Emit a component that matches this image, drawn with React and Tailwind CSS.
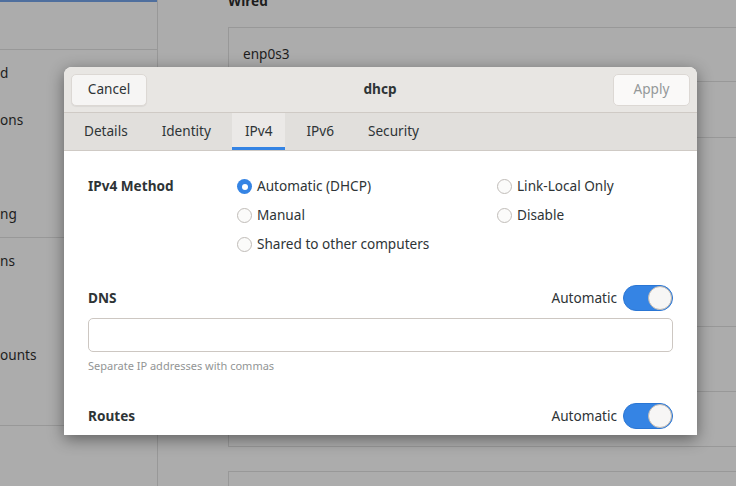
export default function App() {
  const font = { fontFamily: '"Noto Sans", "DejaVu Sans", sans-serif' };

  return (
    <div
      className="relative w-[736px] h-[486px] overflow-hidden bg-[#acacac] flex text-[#1d1d1d] text-[13.6px]"
      style={font}
    >
      {/* Sidebar behind the dialog */}
      <aside className="w-[158px] shrink-0 border-r border-[#989898] flex flex-col">
        <div className="h-[2px] bg-[#4f6f9e]" />
        <div className="h-[48px] border-b border-[#989898]" />
        <SideRow label="d" />
        <SideRow label="ons" />
        <SideRow label="" />
        <SideRow label="ng" last />
        <SideRow label="ns" />
        <SideRow label="" />
        <SideRow label="ounts" />
        <SideRow label="" last />
      </aside>

      {/* Network page behind the dialog */}
      <main className="flex-1 pl-[70px]">
        <div className="-mt-[9px] mb-[16px] leading-[20px] font-bold">Wired</div>
        <div className="w-[600px] border border-[#989898] flex flex-col">
          <div className="h-[54px] border-b border-[#989898] flex items-center pl-[14px]">enp0s3</div>
          <div className="h-[56px] border-b border-[#989898]" />
          <div className="h-[189px] border-b border-[#989898]" />
          <div className="h-[65px] border-b border-[#989898]" />
          <div className="h-[54px]" />
        </div>
        <div className="mt-[24px] w-[600px] h-[60px] border border-[#989898]" />
      </main>

      {/* Dialog */}
      <div className="absolute left-[64px] top-[67px] w-[633px] h-[368px] rounded-t-[8px] overflow-hidden bg-white flex flex-col shadow-[0_4px_16px_rgba(0,0,0,0.45)] text-[#2e3436]">
        {/* Header bar */}
        <div className="h-[46px] shrink-0 bg-[#e8e6e3] border-b border-[#cfcac5] flex items-center justify-between px-[7px]">
          <button className="w-[76px] h-[32px] rounded-[5px] bg-[#f6f5f4] border border-[#dcd8d4] shadow-[0_1px_1px_rgba(0,0,0,0.06)] text-[#2e3436]">
            Cancel
          </button>
          <div className="font-bold">dhcp</div>
          <button className="w-[77px] h-[32px] rounded-[5px] bg-[#faf9f8] border border-[#dcd8d4] text-[#949898]">
            Apply
          </button>
        </div>

        {/* Tabs */}
        <div className="h-[38px] shrink-0 bg-[#e1dfdc] border-b border-[#cfcac5] flex items-stretch pl-[7px] gap-[8px]">
          <Tab label="Details" />
          <Tab label="Identity" />
          <Tab label="IPv4" active />
          <Tab label="IPv6" />
          <Tab label="Security" />
        </div>

        {/* Content */}
        <div className="flex-1 px-6 pt-[21px] flex flex-col">
          <div className="flex">
            <div className="w-[149px] h-[29px] flex items-center font-bold">IPv4 Method</div>
            <div className="w-[260px] flex flex-col">
              <Radio label="Automatic (DHCP)" checked />
              <Radio label="Manual" />
              <Radio label="Shared to other computers" />
            </div>
            <div className="flex flex-col">
              <Radio label="Link-Local Only" />
              <Radio label="Disable" />
            </div>
          </div>

          <div className="mt-[26px] h-[26px] flex items-center justify-between">
            <div className="font-bold">DNS</div>
            <div className="flex items-center gap-[6px]">
              <span>Automatic</span>
              <Switch />
            </div>
          </div>
          <div className="mt-[7px] h-[34px] rounded-[5px] border border-[#cdc7c2] bg-white" />
          <div className="mt-[6px] text-[11px] leading-[16px] text-[#929595]">
            Separate IP addresses with commas
          </div>

          <div className="mt-[29px] h-[26px] flex items-center justify-between">
            <div className="font-bold">Routes</div>
            <div className="flex items-center gap-[6px]">
              <span>Automatic</span>
              <Switch />
            </div>
          </div>
        </div>
      </div>
    </div>
  );
}

function SideRow({ label, last }) {
  return (
    <div className={`h-[47px] flex items-center ${last ? "border-b border-[#989898]" : ""}`}>
      {label}
    </div>
  );
}

function Tab({ label, active }) {
  return (
    <div
      className={`relative px-[13px] flex items-center ${
        active ? "bg-[#ebe9e7]" : ""
      }`}
    >
      {label}
      {active && <div className="absolute left-0 right-0 bottom-0 h-[3px] bg-[#3584e4]" />}
    </div>
  );
}

function Radio({ label, checked }) {
  return (
    <div className="h-[29px] flex items-center gap-[5px]">
      {checked ? (
        <span className="w-[15px] h-[15px] rounded-full bg-[#3584e4] flex items-center justify-center">
          <span className="w-[6px] h-[6px] rounded-full bg-white" />
        </span>
      ) : (
        <span className="w-[15px] h-[15px] rounded-full border border-[#c0bcb8] bg-[#fbfbfa]" />
      )}
      <span>{label}</span>
    </div>
  );
}

function Switch() {
  return (
    <div className="w-[50px] h-[26px] rounded-full bg-[#3584e4] border border-[#2a76d4] flex items-center justify-end">
      <div className="w-[24px] h-[24px] rounded-full bg-[#f7f6f5] border border-[#bfb8b1]" />
    </div>
  );
}
